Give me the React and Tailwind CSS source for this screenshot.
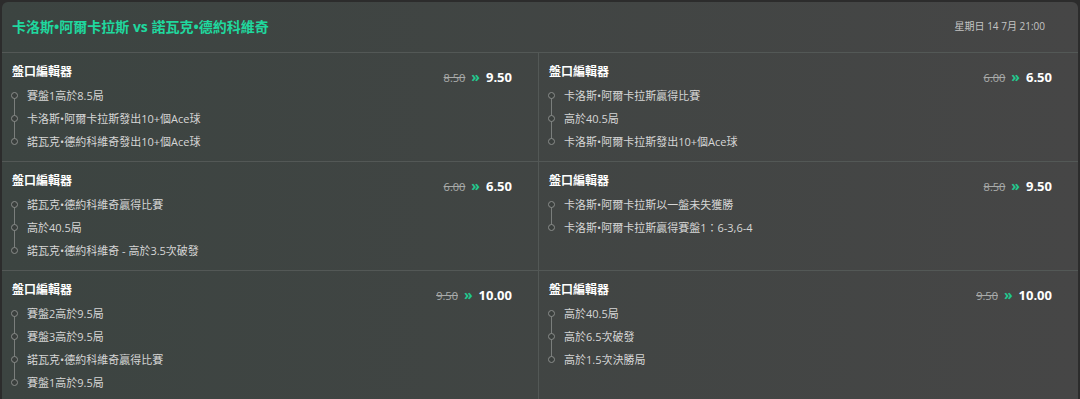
import React from "react";

const FONT = { fontFamily: '"Open Sans", "Noto Sans CJK TC", sans-serif' };

const rows = [
  [
    { old: "8.50", nw: "9.50", items: ["賽盤1高於8.5局", "卡洛斯•阿爾卡拉斯發出10+個Ace球", "諾瓦克•德約科維奇發出10+個Ace球"] },
    { old: "6.00", nw: "6.50", items: ["卡洛斯•阿爾卡拉斯贏得比賽", "高於40.5局", "卡洛斯•阿爾卡拉斯發出10+個Ace球"] },
  ],
  [
    { old: "6.00", nw: "6.50", items: ["諾瓦克•德約科維奇贏得比賽", "高於40.5局", "諾瓦克•德約科維奇 - 高於3.5次破發"] },
    { old: "8.50", nw: "9.50", items: ["卡洛斯•阿爾卡拉斯以一盤未失獲勝", "卡洛斯•阿爾卡拉斯贏得賽盤1：6-3,6-4"] },
  ],
  [
    { old: "9.50", nw: "10.00", items: ["賽盤2高於9.5局", "賽盤3高於9.5局", "諾瓦克•德約科維奇贏得比賽", "賽盤1高於9.5局"] },
    { old: "9.50", nw: "10.00", items: ["高於40.5局", "高於6.5次破發", "高於1.5次決勝局"] },
  ],
];

function Card({ data, left }) {
  return (
    <div className={`flex justify-between pl-[10px] pr-[26px] pt-[10px] pb-[8px] ${left ? "border-r border-[#535856]" : ""}`}>
      <div className="flex flex-col">
        <div className="text-[12px] leading-[18px] font-bold text-white">盤口編輯器</div>
        <div className="flex flex-col mt-[3px] -ml-[5px]">
          {data.items.map((t, i) => (
            <div key={i} className="flex items-center h-[23px]">
              <div className="w-[15px] h-full relative flex items-center justify-center shrink-0">
                {i > 0 && <div className="absolute left-[7px] top-0 h-1/2 w-px bg-[#7a7e7c]" />}
                {i < data.items.length - 1 && <div className="absolute left-[7px] bottom-0 h-1/2 w-px bg-[#7a7e7c]" />}
                <div className="relative w-[7px] h-[7px] rounded-full border border-[#8a8d8b] bg-[#3a3f3d]" />
              </div>
              <span className="ml-[5px] text-[11px] leading-[14px] text-[#d6d6d6] whitespace-nowrap">{t}</span>
            </div>
          ))}
        </div>
      </div>
      <div className="flex items-center h-[18px] mt-[6px] whitespace-nowrap">
        <span className="text-[11px] text-[#a9abaa] line-through">{data.old}</span>
        <span className="ml-[6px] mr-[6px] text-[#22c98f] text-[14px] font-bold leading-none -mt-[2px]">»</span>
        <span className="text-[13px] font-bold text-white">{data.nw}</span>
      </div>
    </div>
  );
}

export default function App() {
  return (
    <div className="w-[1080px] h-[399px] bg-[#2c2c2c] pt-[2px] pl-[2px] pr-[2px] overflow-hidden" style={FONT}>
      <div className="h-[420px] rounded-t-[6px] bg-gradient-to-r from-[#3c4441] to-[#464646]">
        <div className="h-[51px] flex items-center justify-between pl-[10px] pr-[33px] border-b border-[#535856]">
          <div className="text-[14px] font-bold text-[#1fd89e] leading-[20px] -mt-[1px]">卡洛斯•阿爾卡拉斯 vs 諾瓦克•德約科維奇</div>
          <div className="text-[10px] text-[#c4c4c4] -mt-[1px]">星期日 14 7月 21:00</div>
        </div>
        {rows.map((r, i) => (
          <div key={i} className="grid grid-cols-[537px_1fr] border-b border-[#535856]">
            <Card data={r[0]} left />
            <Card data={r[1]} />
          </div>
        ))}
      </div>
    </div>
  );
}
